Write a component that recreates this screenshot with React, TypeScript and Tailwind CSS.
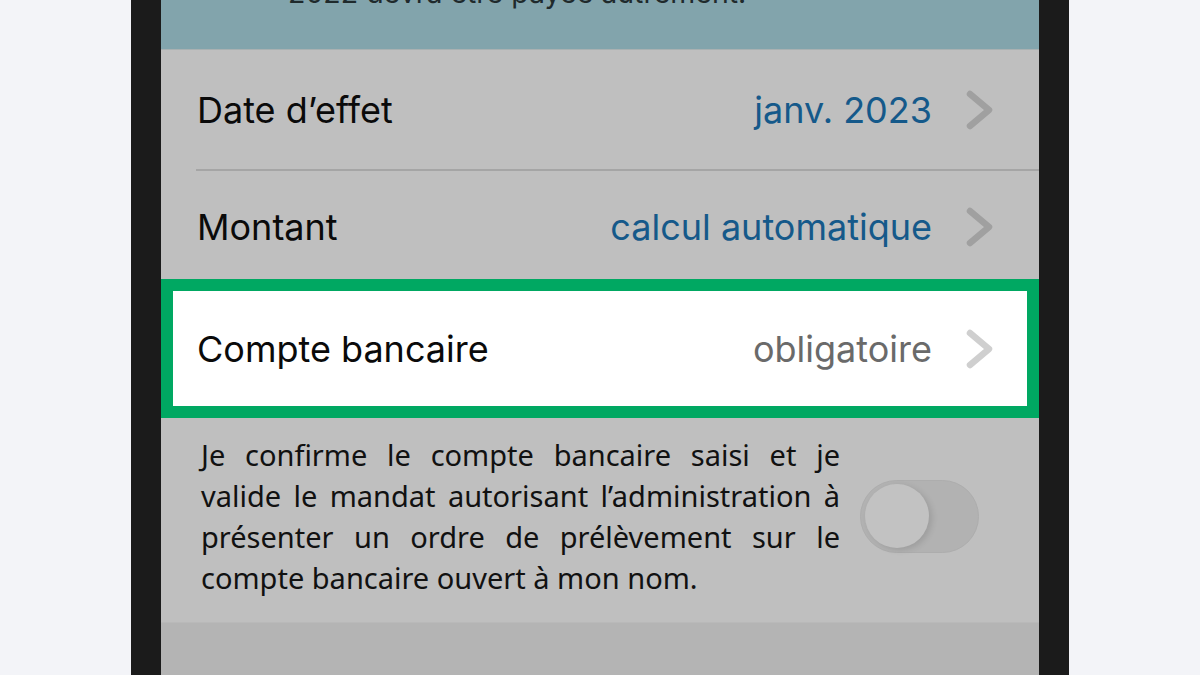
import React from "react";

function Chevron({ color }: { color: string }) {
  return (
    <svg width="30" height="42" viewBox="0 0 30 42" fill="none">
      <polyline points="5,5 24,21 5,37" stroke={color} strokeWidth="6.5" strokeLinecap="round" strokeLinejoin="round" />
    </svg>
  );
}

function Row({ label, value, valueClass, chevron }: { label: string; value: string; valueClass: string; chevron: string }) {
  return (
    <div className="flex items-center justify-between h-full">
      <span className="text-[36px] text-[#0a0a0a]">{label}</span>
      <div className="flex items-center gap-[33px]">
        <span className={`text-[36px] ${valueClass}`}>{value}</span>
        <Chevron color={chevron} />
      </div>
    </div>
  );
}

export default function App() {
  return (
    <div className="w-[1200px] h-[675px] bg-[#f3f4f8] flex justify-center overflow-hidden" style={{ fontFamily: "Inter, 'Noto Sans', sans-serif" }}>
      <div className="w-[938px] h-full bg-[#1b1b1b] px-[30px]">
        <div className="h-full bg-[#bfbfbf] flex flex-col">
          <div className="h-[49px] bg-[#82a4ac] overflow-hidden shrink-0">
            <p className="pl-[127px] mt-[-24px] text-[28.5px] leading-[34px] text-[#1f2a2c]">2022 devra être payée autrement.</p>
          </div>
          <div className="h-[1px] bg-[#a9b1b2] shrink-0" />
          <div className="h-[119px] pl-[36px] pr-[44px] shrink-0">
            <Row label="Date d’effet" value="janv. 2023" valueClass="text-[#15598a]" chevron="#a0a0a0" />
          </div>
          <div className="ml-[35px] h-[2px] bg-[#a5a5a5] shrink-0" />
          <div className="h-[108px] pl-[36px] pr-[44px] shrink-0 pt-[4px]">
            <Row label="Montant" value="calcul automatique" valueClass="text-[#15598a]" chevron="#a0a0a0" />
          </div>
          <div className="h-[139px] border-[12px] border-[#00a862] bg-white pl-[24px] pr-[32px] shrink-0">
            <Row label="Compte bancaire" value="obligatoire" valueClass="text-[#6a6a6a]" chevron="#cfcfcf" />
          </div>
          <div className="h-[204px] flex items-center pl-[40px] pr-[60px] gap-[20px] shrink-0 pb-[8px]">
            <p className="w-[639px] text-[29px] leading-[41px] text-[#111] text-justify" style={{ fontFamily: "'Noto Sans', sans-serif" }}>
              Je confirme le compte bancaire saisi et je valide le mandat autorisant l’administration à présenter un ordre de prélèvement sur le compte bancaire ouvert à mon nom.
            </p>
            <div className="w-[119px] h-[73px] rounded-full bg-[#b2b2b2] border border-[#adadad] flex items-center pl-[4px] shrink-0">
              <div className="w-[64px] h-[64px] rounded-full bg-[#c2c2c2] shadow-[3px_2px_6px_rgba(0,0,0,0.12)]" />
            </div>
          </div>
          <div className="flex-1 bg-[#b4b4b4] border-t border-[#b9b9b9]" />
        </div>
      </div>
    </div>
  );
}
